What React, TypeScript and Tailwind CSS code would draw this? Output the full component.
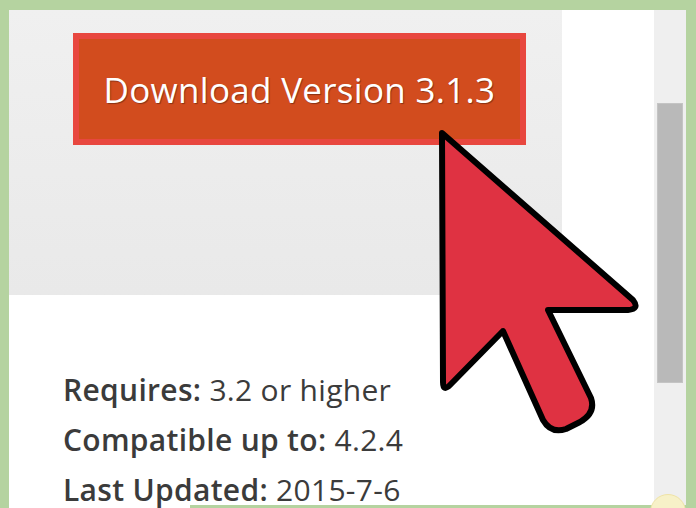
/** Plugin download panel with a pointer arrow over the button. */

const rows = [
  { label: "Requires:", value: "3.2 or higher" },
  { label: "Compatible up to:", value: "4.2.4" },
  { label: "Last Updated:", value: "2015-7-6" },
];

function Pointer() {
  return (
    <svg
      className="absolute left-0 top-0 pointer-events-none"
      width="696"
      height="508"
      viewBox="0 0 696 508"
    >
      <path
        d="M442 133 L633 300 Q640 309 628 310 L548 310 L591 398 Q596 413 580 422 L566 429 Q551 434 543 420 L503 331 L450 385 Q443 392 443 382 Z"
        fill="#df3242"
        stroke="#000"
        strokeWidth="6"
        strokeLinejoin="round"
      />
    </svg>
  );
}

export default function App() {
  return (
    <div className="relative w-[696px] h-[508px] overflow-hidden bg-[#b5d3a0] pt-[10px] pl-[9px] pr-[10px]">
      <div className="flex h-full bg-white">
        {/* Main column */}
        <div className="w-[553px] flex flex-col">
          <div className="shrink-0 h-[285px] bg-gradient-to-b from-[#f0f0f0] to-[#e9e9e9] pt-[23px] pl-[64px]">
            <div className="w-[453px] h-[112px] border-[6px] border-[#e8473f] bg-[#d24c1e] flex items-center justify-center">
              <span
                className="text-white text-[35px] leading-none tracking-[0.3px]"
                style={{ fontFamily: '"Open Sans", sans-serif', textShadow: "1px 1px 1px rgba(0,0,0,0.35)" }}
              >
                Download Version 3.1.3
              </span>
            </div>
          </div>
          <div
            className="shrink-0 mt-[70px] pl-[54px] text-[#3b3b3b] text-[30px] leading-[50px] tracking-[0.3px]"
            style={{ fontFamily: '"Open Sans", sans-serif' }}
          >
            {rows.map((r) => (
              <div key={r.label} className="whitespace-nowrap">
                <span className="font-semibold">{r.label}</span> {r.value}
              </div>
            ))}
          </div>
        </div>

        {/* White gutter */}
        <div className="w-[92px] bg-white" />

        {/* Scrollbar */}
        <div className="w-[32px] bg-[#efefef] pt-[93px] pl-[3px] pr-[3px]">
          <div className="h-[280px] bg-[#b9b9b9] border border-[#c4c4c4]" />
        </div>
      </div>

      {/* Bottom edge of next frame */}
      <div className="absolute left-[190px] right-0 bottom-0 h-[3px] bg-[#b5d3a0]" />
      <div className="absolute right-[10px] bottom-[-22px] w-[36px] h-[36px] rounded-full bg-[#f7f1c8] border border-[#efe3a6]" />

      <Pointer />
    </div>
  );
}
